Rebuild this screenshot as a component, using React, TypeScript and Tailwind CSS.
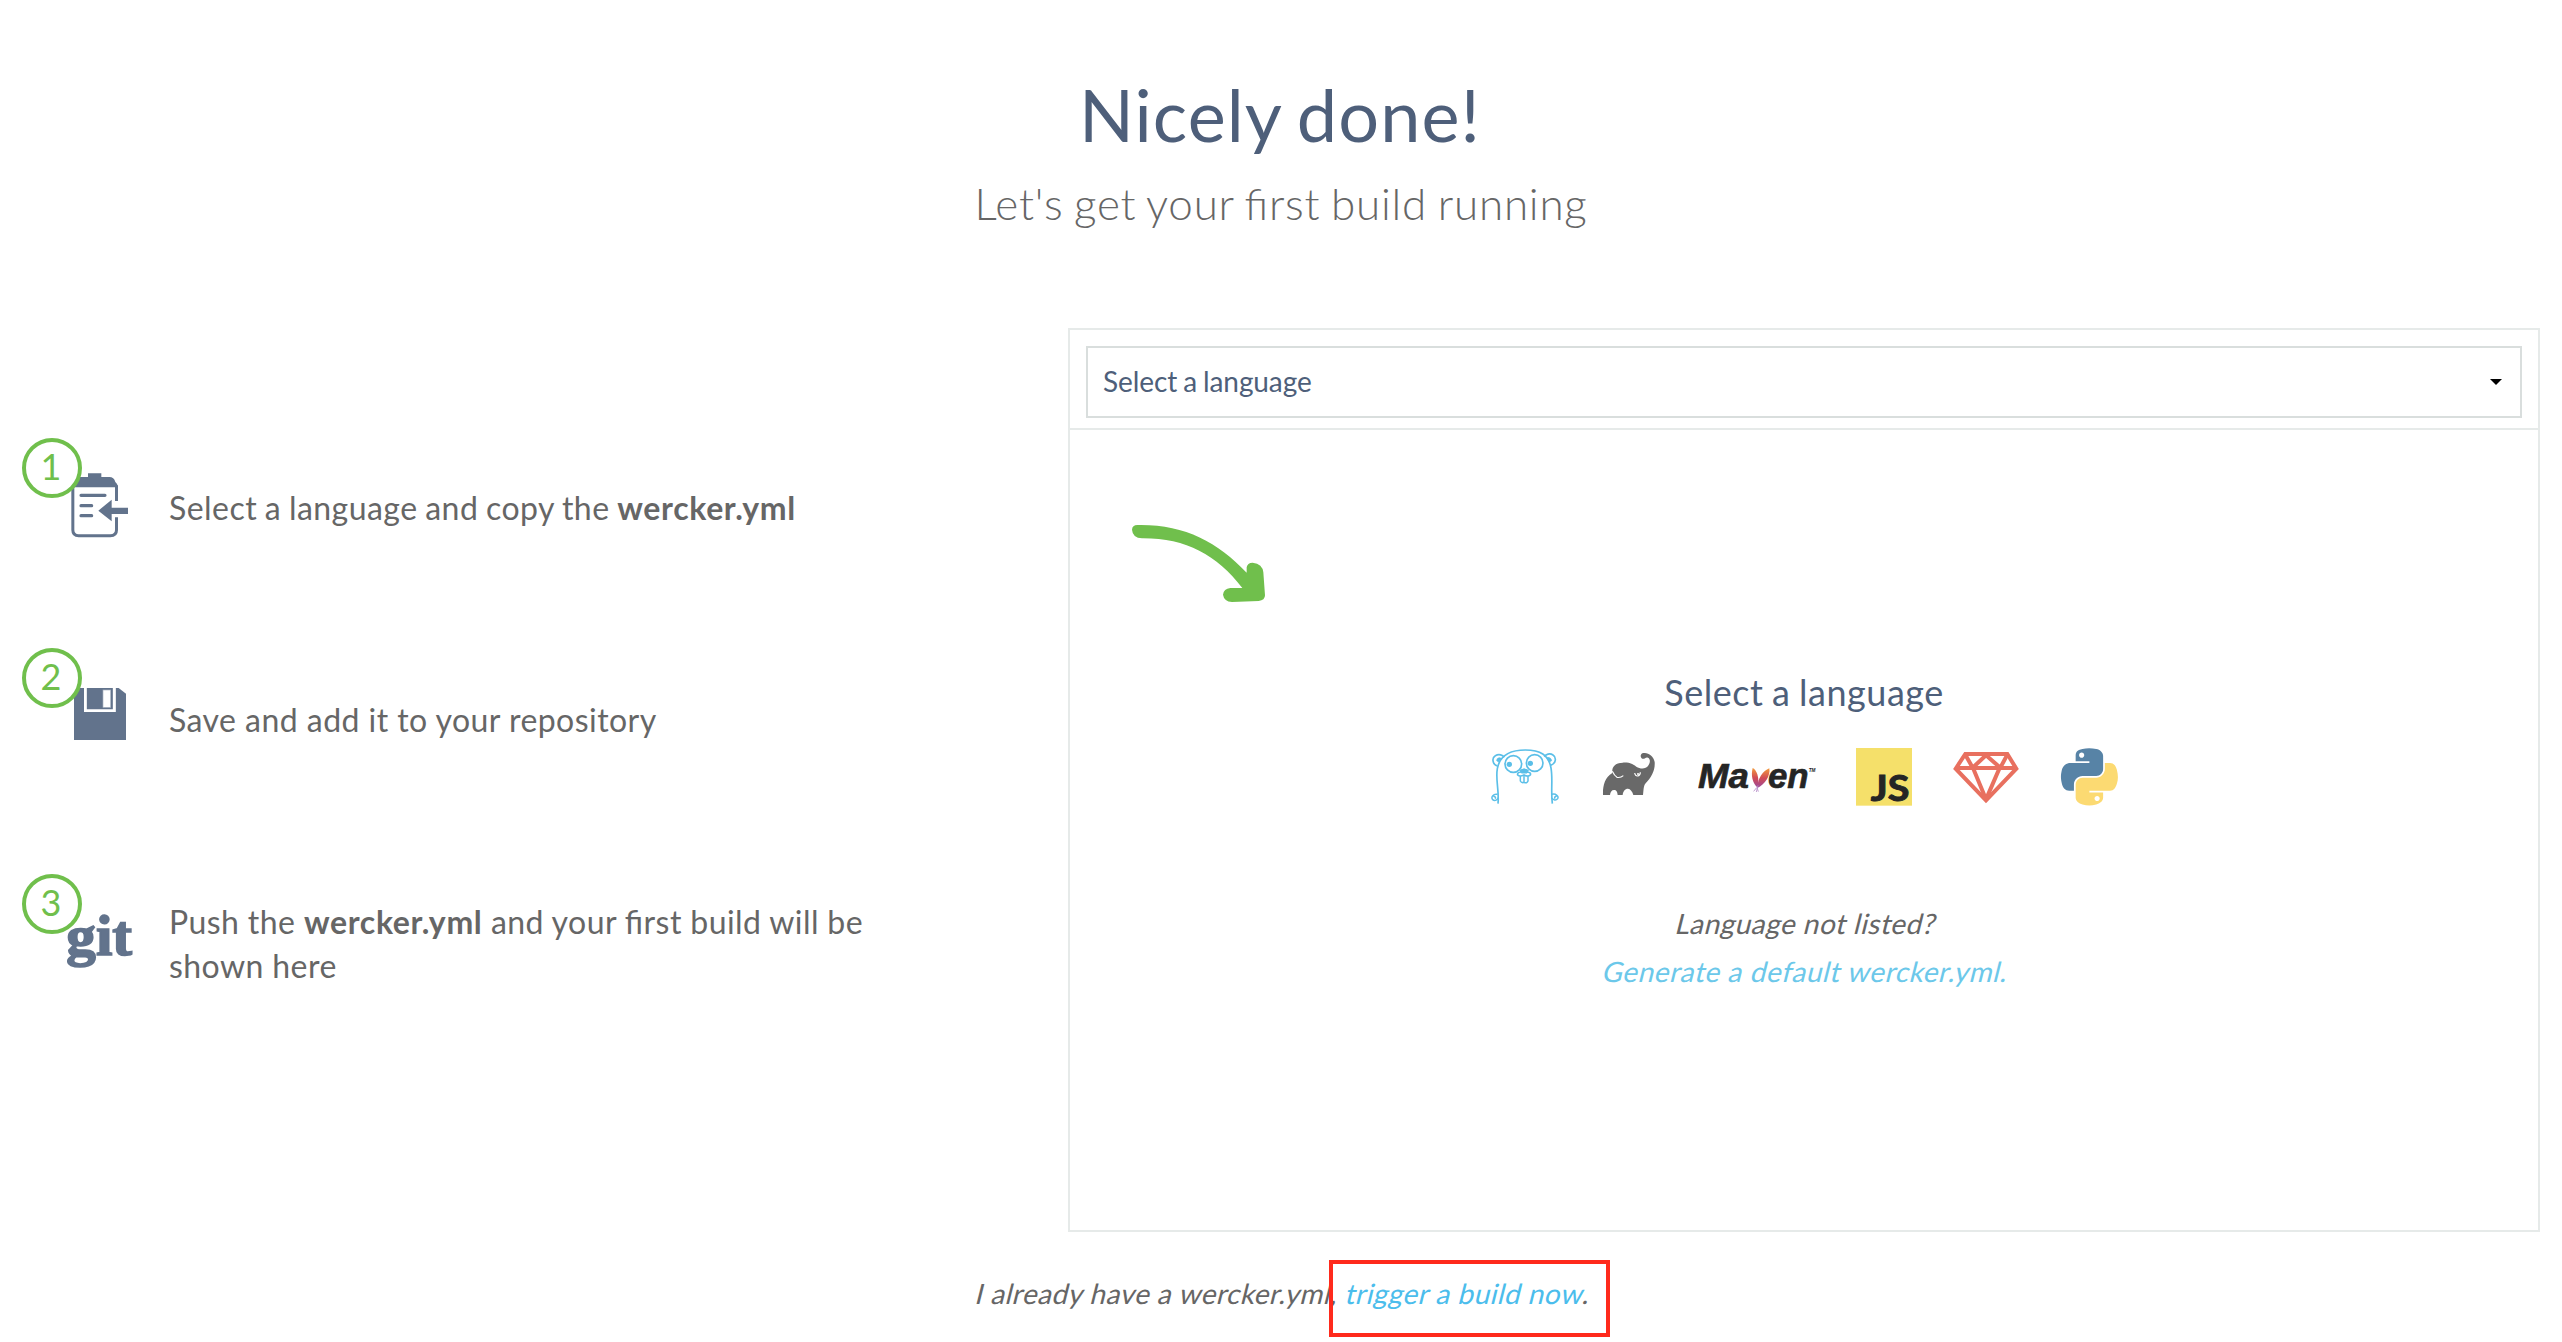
import type { ReactNode } from 'react';

function ClipboardIcon() {
  return (
    <svg className="h-[100px] w-[116px]" viewBox="66 54 348 300" fill="none">
      <path d="M218.500 195V330Q218.500 347 236 347H331Q349.500 347 349.500 330V292M349.500 243V196" stroke="#62738c" strokeWidth="9" />
      <path d="M214 202V190Q216 171 236 171H264V160H304V171H328Q342 171 346 186Q354 192 354 202Z" fill="#62738c" />
      <path d="M243 226H315M243 257H275M243 287H275" stroke="#62738c" strokeWidth="9.500" strokeLinecap="round" />
      <path d="M295 272L335 239V263H384V282H335V304Z" fill="#62738c" />
    </svg>
  );
}

function FloppyIcon() {
  return (
    <svg className="h-[100px] w-[116px]" viewBox="66 54 348 300">
      <path d="M222 174H356L378 191V330H222Z" fill="#62738c" />
      <path d="M252 174H260.500V238H338.500V174H347.500V246H252Z" fill="#fff" />
      <rect x="309" y="180" width="23" height="52" fill="#fff" stroke="#a9b3c2" strokeWidth="2" />
    </svg>
  );
}

function GitIcon() {
  return (
    <svg className="h-[100px] w-[116px]" viewBox="66 42 348 300">
      <text x="199" y="286" fontFamily="Liberation Serif, serif" fontWeight="700" fontSize="171" textLength="197" lengthAdjust="spacingAndGlyphs" fill="#62738c" stroke="#62738c" strokeWidth="5">git</text>
    </svg>
  );
}

function Step({ n, icon, className, textClass, children }: { n: number; icon: ReactNode; className: string; textClass: string; children: ReactNode }) {
  return (
    <li className={`flex items-start ${className}`}>
      <div className="relative shrink-0">
        {icon}
        <span className="absolute left-0 top-0 flex size-[60px] items-center justify-center rounded-full border-4 border-[#70bf4c] bg-white pb-[4px] pr-[2px] text-[36px] leading-[44px] text-[#70bf4c]">
          {n}
        </span>
      </div>
      <p className={`ml-[31px] w-[740px] text-[32px] leading-[44px] tracking-[0.45px] text-[#666] ${textClass}`}>{children}</p>
    </li>
  );
}

function FileName() {
  return <b className="tracking-[0.65px]">wercker.yml</b>;
}

function CurvedArrow() {
  return (
    <svg className="h-[78px] w-[134px]" viewBox="216 612 402 234" fill="#70bf4c">
      <path d="M216 629Q217 615 232 615C370 612 472 664 560 758V742Q562 728 578 728Q608 732 610 757L615 826Q615 841 596 843L516 846Q492 844 489 824Q491 806 511 804H547C470 704 376 654 246 655Q218 654 216 629Z" />
    </svg>
  );
}

function GopherLogo() {
  return (
    <svg className="h-[60px] w-[72px]" viewBox="60 48 216 180" fill="none" stroke="#5bbfe8" strokeWidth="5">
      <path d="M84 221C88 180 76 150 82 116C90 72 125 60 166 60C210 60 236 74 243 114C249 148 242 180 247 221" />
      <path d="M82 108C68 104 64 84 76 77C87 71 98 75 103 82M243 106C258 100 260 82 249 75C239 68 228 73 223 80" />
      <circle cx="130" cy="102" r="25" />
      <circle cx="194" cy="99" r="25" />
      <path d="M88 83Q80 84 80 92L86 96L94 85ZM233 82Q244 83 245 92L238 96L230 86Z" fill="#5bbfe8" strokeWidth="2" />
      <circle cx="118" cy="103" r="8" fill="#5bbfe8" stroke="none" />
      <circle cx="181" cy="100" r="8" fill="#5bbfe8" stroke="none" />
      <path d="M150 121Q162 112 175 121L171 129H154Z" fill="#5bbfe8" strokeWidth="3" />
      <path d="M153 126Q141 127 143 135Q149 141 162 135Q175 141 181 135Q184 127 171 126" />
      <path d="M151 138V153Q155 160 162 157Q171 161 174 153V138M162 138V157" strokeWidth="4.500" />
      <path d="M83 193C70 190 62 201 68 209C75 215 83 209 85 202M70 199Q78 200 76 206M246 193C258 190 267 199 263 206C258 213 249 210 246 204M260 198Q252 200 255 206" strokeWidth="4.500" />
    </svg>
  );
}

function GradleLogo() {
  return (
    <svg className="h-[60px] w-[56px]" viewBox="396 48 168 180">
      <path d="M399 195C398 168 404 143 427 129C425 112 433 99 458 98C478 97 485 101 499 110C511 118 528 117 534 108C541 99 542 87 534 83C527 80 524 88 517 86C511 83 510 74 517 70C532 65 550 76 554 96C556 122 543 143 527 160C520 168 521 181 519 195H490C487 184 481 177 474 176C465 176 459 184 458 195H443C442 184 438 179 432 180C425 180 421 186 420 195Z" fill="#696969" />
      <path d="M427 124Q433 137 441 142Q452 144 460 137" fill="none" stroke="#fff" strokeWidth="3.500" />
      <path d="M494 129Q496 139 504 138Q511 136 511 127" fill="none" stroke="#fff" strokeWidth="3.500" />
      <circle cx="504" cy="132" r="3" fill="#fff" />
    </svg>
  );
}

function MavenLogo() {
  return (
    <svg className="h-[60px] w-[118px]" viewBox="684 48 354 180" fontFamily="Liberation Sans, sans-serif" fontStyle="italic" fontWeight="700" fill="#252525">
      <defs>
        <linearGradient id="feather" x1="0" y1="0" x2="0" y2="1">
          <stop offset="0" stopColor="#f39a3c" />
          <stop offset="0.5" stopColor="#d14b55" />
          <stop offset="1" stopColor="#9b4a9c" />
        </linearGradient>
      </defs>
      <text x="684" y="174" fontSize="107" textLength="153" lengthAdjust="spacingAndGlyphs" stroke="#252525" strokeWidth="2">Ma</text>
      <text x="894" y="174" fontSize="107" textLength="122" lengthAdjust="spacingAndGlyphs" stroke="#252525" strokeWidth="2">en</text>
      <path d="M848 114C859 118 870 143 863 173C848 162 842 137 848 114Z" fill="url(#feather)" />
      <path d="M898 115C902 138 884 164 862 174C862 147 879 122 898 115Z" fill="url(#feather)" />
      <path d="M864 166L859 186M860 173L851 184M861 172L865 185" stroke="#b48bc8" strokeWidth="2.500" fill="none" />
      <text x="1016" y="126" fontSize="14">TM</text>
    </svg>
  );
}

function JsLogo() {
  return (
    <svg className="h-[60px] w-[56px]" viewBox="138 48 168 180">
      <rect x="138" y="54" width="168" height="173" fill="#f5e06a" />
      <text x="182" y="212" fontFamily="Lato, sans-serif" fontWeight="700" fontSize="108" textLength="116" lengthAdjust="spacingAndGlyphs" fill="#252525" stroke="#252525" strokeWidth="3">JS</text>
    </svg>
  );
}

function RubyLogo() {
  return (
    <svg className="h-[60px] w-[68px]" viewBox="426 48 204 180" fill="none" stroke="#e8705f" strokeWidth="12" strokeLinejoin="round">
      <path d="M466 72H592L619 116L528 211L437 116Z" strokeLinejoin="miter" />
      <path d="M436 114H620M466 74L488 113L528 76L571 113L592 74M490 116L528 208L568 116" />
    </svg>
  );
}

function PythonLogo() {
  return (
    <svg className="h-[60px] w-[60px]" viewBox="750 48 180 180">
      <g transform="translate(731.400 51.700) scale(1.670 1.660)">
        <path fill="#5783a6" d="M63.391 1.988c-4.222.02-8.252.379-11.8 1.007-10.45 1.846-12.346 5.71-12.346 12.837v9.411h24.693v3.137H29.977c-7.176 0-13.460 4.313-15.426 12.521-2.268 9.405-2.368 15.275 0 25.096 1.755 7.311 5.947 12.519 13.124 12.519h8.491V67.234c0-8.151 7.051-15.340 15.426-15.340h24.665c6.866 0 12.346-5.654 12.346-12.548V15.833c0-6.693-5.646-11.720-12.346-12.837-4.244-.706-8.645-1.027-12.866-1.008zM50.037 9.557c2.550 0 4.634 2.117 4.634 4.721 0 2.593-2.083 4.690-4.634 4.690-2.560 0-4.633-2.097-4.633-4.690-.001-2.604 2.073-4.721 4.633-4.721z" />
        <path fill="#fcda72" d="M91.682 28.380v10.966c0 8.500-7.208 15.655-15.426 15.655H51.591c-6.756 0-12.346 5.783-12.346 12.549v23.515c0 6.691 5.818 10.628 12.346 12.547 7.816 2.297 15.312 2.713 24.665 0 6.216-1.801 12.346-5.423 12.346-12.547v-9.412H63.938v-3.138h37.012c7.176 0 9.852-5.005 12.348-12.519 2.578-7.735 2.467-15.174 0-25.096-1.774-7.145-5.161-12.521-12.348-12.521h-9.268zM77.809 87.927c2.561 0 4.634 2.097 4.634 4.692 0 2.602-2.074 4.719-4.634 4.719-2.550 0-4.633-2.117-4.633-4.719 0-2.595 2.083-4.692 4.633-4.692z" />
      </g>
    </svg>
  );
}

function LanguagePanel() {
  return (
    <section className="h-[904px] w-[1472px] border-2 border-[#e6eae9]">
      <div className="border-b-2 border-[#e6eae9] px-4 pb-[10px] pt-4">
        <button className="flex h-[72px] w-full items-center justify-between border-2 border-[#d9dedd] pl-[15px] pr-[18px] text-[28px] leading-[40px] text-[#4e5f7a]">
          <span className="pb-[2px] tracking-[-0.1px] [word-spacing:-1px]">Select a language</span>
          <svg className="h-[6px] w-3" viewBox="0 0 12 6"><path d="M0 0H12L6 6Z" fill="#000" /></svg>
        </button>
      </div>
      <div className="pl-[62px] pt-[94px]">
        <CurvedArrow />
      </div>
      <div className="flex flex-col items-center">
        <h3 className="mt-[68px] text-[36px] leading-[44px] tracking-[0.5px] [word-spacing:-1px] text-[#4e5f7a]">Select a language</h3>
        <div className="mt-8 flex gap-10 pl-[2px]">
          <GopherLogo />
          <GradleLogo />
          <MavenLogo />
          <JsLogo />
          <RubyLogo />
          <PythonLogo />
        </div>
        <div className="mt-[93px] flex flex-col items-center text-[28px] leading-[48px] text-[#666]">
          <p className="origin-[50%_35px] -skew-x-[14deg] tracking-[0.45px]">Language not listed?</p>
          <a className="origin-[50%_35px] -skew-x-[14deg] tracking-[0.55px] text-[#6cc8ea]">Generate a default wercker.yml.</a>
        </div>
      </div>
    </section>
  );
}

export default function App() {
  return (
    <main className="h-[1342px] w-[2562px] overflow-hidden bg-white pt-[74px] font-['Lato',sans-serif] [font-feature-settings:'liga'_1]">
      <header className="text-center">
        <h1 className="pr-[2px] text-[72px] leading-[80px] tracking-[1.1px] [word-spacing:-4px] text-[#4e5f7a]">Nicely done!</h1>
        <h2 className="mt-[19px] text-[44px] font-light leading-[60px] tracking-[0.75px] [word-spacing:-2px] text-[#666]">Let's get your first build running</h2>
      </header>
      <div className="mt-[95px] flex">
        <ol className="w-[1068px] pl-[22px] pt-[110px]">
          <Step n={1} icon={<ClipboardIcon />} className="h-[210px]" textClass="mt-[48px] [word-spacing:-0.9px]">
            Select a language and copy the <FileName />
          </Step>
          <Step n={2} icon={<FloppyIcon />} className="h-[226px]" textClass="mt-[50px]">
            Save and add it to your repository
          </Step>
          <Step n={3} icon={<GitIcon />} className="h-[120px]" textClass="mt-[26px] [word-spacing:-0.2px]">
            Push the <FileName /> and your first build will be shown here
          </Step>
        </ol>
        <LanguagePanel />
      </div>
      <footer className="relative mt-[37px] flex justify-center text-[28px] leading-[48px] text-[#666]">
        <p className="origin-[50%_35px] -skew-x-[14deg] tracking-[0.46px]">
          I already have a wercker.yml, <a className="text-[#4bbdec]">trigger a build now</a>.
        </p>
        <span className="absolute -top-[9px] left-[1329px] h-[77px] w-[281px] border-4 border-[#ff2a1c]" />
      </footer>
    </main>
  );
}
